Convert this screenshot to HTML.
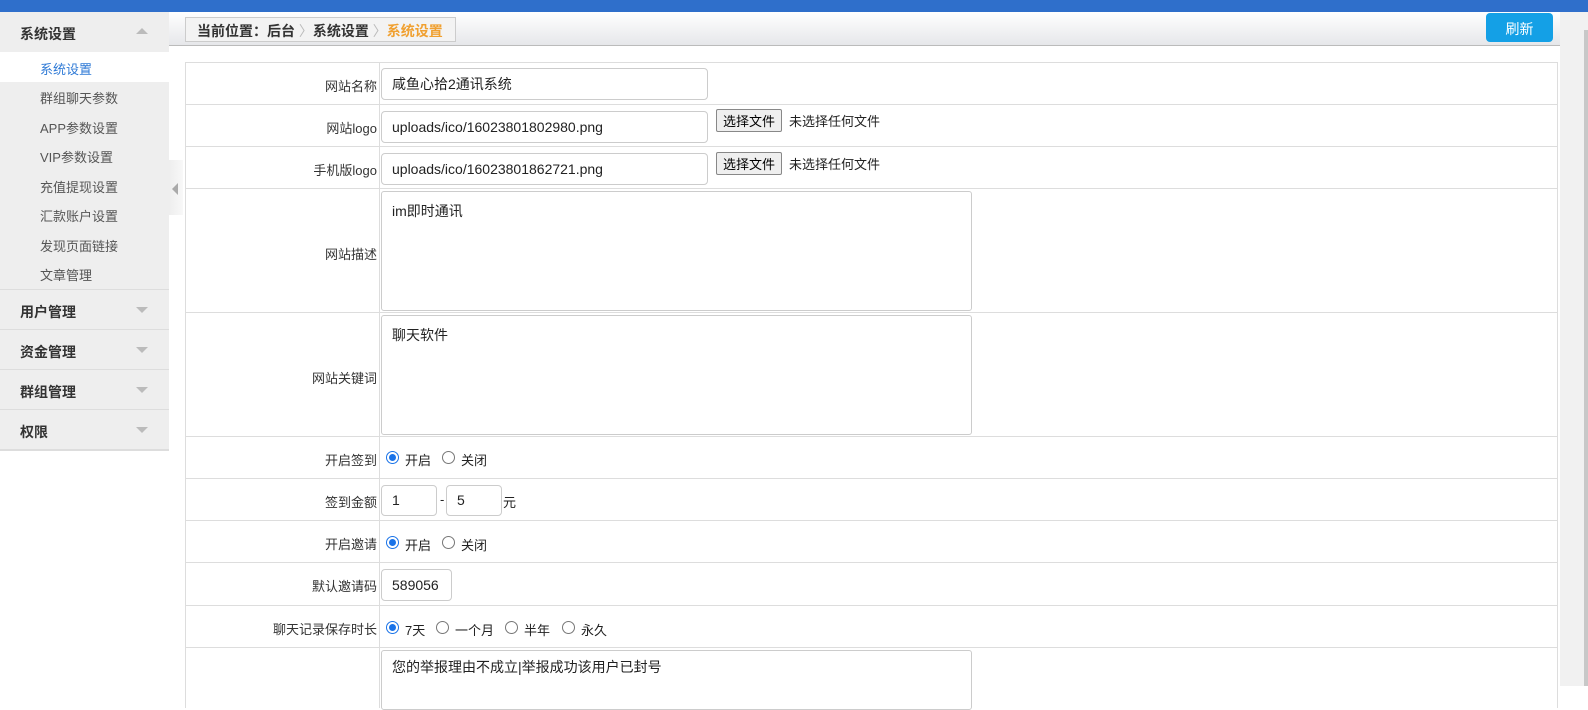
<!DOCTYPE html><html><head><meta charset="utf-8"><style>
*{margin:0;padding:0;box-sizing:border-box}
body{width:1588px;height:686px;overflow:hidden;background:#fff;font-family:"Liberation Sans","Noto Sans CJK SC",sans-serif;font-size:13px;color:#333;position:relative}
.a{position:absolute}
#top{left:0;top:0;width:1588px;height:12px;background:#2f6fcb}
#side{left:0;top:12px;width:169px;height:439px;background:#eee;border-bottom:1px solid #ddd}
.sh{position:absolute;left:0;width:169px;height:40px;border-bottom:1px solid #ddd;font-weight:bold;font-size:14px;color:#333;padding:12px 0 0 20px}
.sh i{position:absolute;right:21px;top:17px;width:0;height:0;border-left:6px solid transparent;border-right:6px solid transparent;border-top:6px solid #bbb}
.sh i.up{border-top:0;border-bottom:6px solid #bbb;top:16px}
.it{position:absolute;left:0;width:169px;height:30px;padding:7px 0 0 40px;color:#555}
#bc{left:169px;top:12px;width:1391px;height:34px;background:linear-gradient(#fff,#e6e7ea);border-bottom:1px solid #bbb}
#crumb{left:185px;top:17px;width:271px;height:25px;border:1px solid #ccc;background:#f3f3f3;font-size:14px;font-weight:bold;color:#333;padding:3px 0 0 11px;white-space:nowrap}
#btn{left:1486px;top:13px;width:67px;height:29px;background:#14a0e6;border-radius:4px;color:#fff;font-size:14px;text-align:center;padding-top:6px}
#sb{left:1560px;top:12px;width:28px;height:674px;background:#f1f1f1}
.row{position:absolute;left:185px;width:1373px;border-bottom:1px solid #ddd;border-left:1px solid #ddd;border-right:1px solid #ddd}
.lab{position:absolute;left:0;width:194px;text-align:right;font-size:13px;color:#333;border-right:1px solid #ddd;height:100%;padding-right:2px}
.inp{position:absolute;border:1px solid #ccc;border-radius:4px;background:#fff;padding:0 10px;font-size:14px;color:#222}
.fb{position:absolute;border:1px solid #888;border-radius:2px;background:#efefef;font-size:13px;padding:1px 6px;color:#000}
.rad{position:absolute;width:13px;height:13px;border-radius:50%;border:1px solid #777;background:#fff}
.rad.on{border:1px solid #1a73e8}
.rad.on:after{content:"";position:absolute;left:2px;top:2px;width:7px;height:7px;border-radius:50%;background:#1a73e8}
.t{position:absolute;font-size:13px;color:#222;white-space:nowrap}
</style></head><body>
<div id="top" class="a"></div>
<div id="side" class="a">
<div class="sh" style="top:0;background:#eee;border:0;">系统设置<i class="up"></i></div>
<div class="it" style="top:40px;background:#fff;color:#2f7ad6">系统设置</div>
<div class="it" style="top:69px">群组聊天参数</div>
<div class="it" style="top:99px">APP参数设置</div>
<div class="it" style="top:128px">VIP参数设置</div>
<div class="it" style="top:158px">充值提现设置</div>
<div class="it" style="top:187px">汇款账户设置</div>
<div class="it" style="top:217px">发现页面链接</div>
<div class="it" style="top:246px;border-bottom:1px solid #ddd;height:32px">文章管理</div>
<div class="sh" style="top:278px">用户管理<i></i></div>
<div class="sh" style="top:318px">资金管理<i></i></div>
<div class="sh" style="top:358px">群组管理<i></i></div>
<div class="sh" style="top:398px">权限<i></i></div>
</div>
<div class="a" style="left:169px;top:160px;width:14px;height:55px;background:linear-gradient(90deg,#eee,#f8f8f8)"></div>
<div class="a" style="left:172px;top:183px;width:0;height:0;border-top:6px solid transparent;border-bottom:6px solid transparent;border-right:6px solid #aaa"></div>
<div id="bc" class="a"></div>
<div id="crumb" class="a">当前位置：后台 <span style="color:#bbb;font-weight:normal">〉</span>系统设置 <span style="color:#bbb;font-weight:normal">〉</span><span style="color:#f0a030">系统设置</span></div>
<div id="btn" class="a">刷新</div>
<div id="sb" class="a"><div class="a" style="left:24px;top:18px;width:4px;height:656px;background:#c8c8c8"></div></div>

<div class="row" style="top:62px;height:43px;border-top:1px solid #ddd"><div class="lab" style="padding-top:13px">网站名称</div></div>
<div class="inp" style="left:381px;top:68px;width:327px;height:32px;line-height:30px">咸鱼心拾2通讯系统</div>
<div class="row" style="top:105px;height:42px"><div class="lab" style="padding-top:13px">网站logo</div></div>
<div class="inp" style="left:381px;top:111px;width:327px;height:32px;line-height:30px">uploads/ico/16023801802980.png</div>
<div class="fb" style="left:716px;top:109px">选择文件</div><div class="t" style="left:789px;top:111px">未选择任何文件</div>
<div class="row" style="top:147px;height:42px"><div class="lab" style="padding-top:13px">手机版logo</div></div>
<div class="inp" style="left:381px;top:153px;width:327px;height:32px;line-height:30px">uploads/ico/16023801862721.png</div>
<div class="fb" style="left:716px;top:152px">选择文件</div><div class="t" style="left:789px;top:154px">未选择任何文件</div>
<div class="row" style="top:189px;height:124px"><div class="lab" style="padding-top:55px">网站描述</div></div>
<div class="inp" style="left:381px;top:191px;width:591px;height:120px;border-radius:3px;padding-top:9px">im即时通讯</div>
<div class="row" style="top:313px;height:124px"><div class="lab" style="padding-top:55px">网站关键词</div></div>
<div class="inp" style="left:381px;top:315px;width:591px;height:120px;border-radius:3px;padding-top:9px">聊天软件</div>
<div class="row" style="top:437px;height:42px"><div class="lab" style="padding-top:13px">开启签到</div></div>
<div class="rad on" style="left:386px;top:451px"></div><div class="t" style="left:405px;top:450px">开启</div>
<div class="rad" style="left:442px;top:451px"></div><div class="t" style="left:461px;top:450px">关闭</div>
<div class="row" style="top:479px;height:42px"><div class="lab" style="padding-top:13px">签到金额</div></div>
<div class="inp" style="left:381px;top:485px;width:56px;height:31px;line-height:29px">1</div>
<div class="t" style="left:440px;top:492px">-</div>
<div class="inp" style="left:446px;top:485px;width:56px;height:31px;line-height:29px">5</div>
<div class="t" style="left:503px;top:492px">元</div>
<div class="row" style="top:521px;height:42px"><div class="lab" style="padding-top:13px">开启邀请</div></div>
<div class="rad on" style="left:386px;top:536px"></div><div class="t" style="left:405px;top:535px">开启</div>
<div class="rad" style="left:442px;top:536px"></div><div class="t" style="left:461px;top:535px">关闭</div>
<div class="row" style="top:563px;height:43px"><div class="lab" style="padding-top:13px">默认邀请码</div></div>
<div class="inp" style="left:381px;top:569px;width:71px;height:32px;line-height:30px">589056</div>
<div class="row" style="top:606px;height:42px"><div class="lab" style="padding-top:13px">聊天记录保存时长</div></div>
<div class="rad on" style="left:386px;top:621px"></div><div class="t" style="left:405px;top:620px">7天</div>
<div class="rad" style="left:436px;top:621px"></div><div class="t" style="left:455px;top:620px">一个月</div>
<div class="rad" style="left:505px;top:621px"></div><div class="t" style="left:524px;top:620px">半年</div>
<div class="rad" style="left:562px;top:621px"></div><div class="t" style="left:581px;top:620px">永久</div>
<div class="row" style="top:648px;height:60px;border-bottom:0"><div class="lab"></div></div>
<div class="inp" style="left:381px;top:650px;width:591px;height:60px;border-radius:3px;padding-top:6px">您的举报理由不成立|举报成功该用户已封号</div>
</body></html>
